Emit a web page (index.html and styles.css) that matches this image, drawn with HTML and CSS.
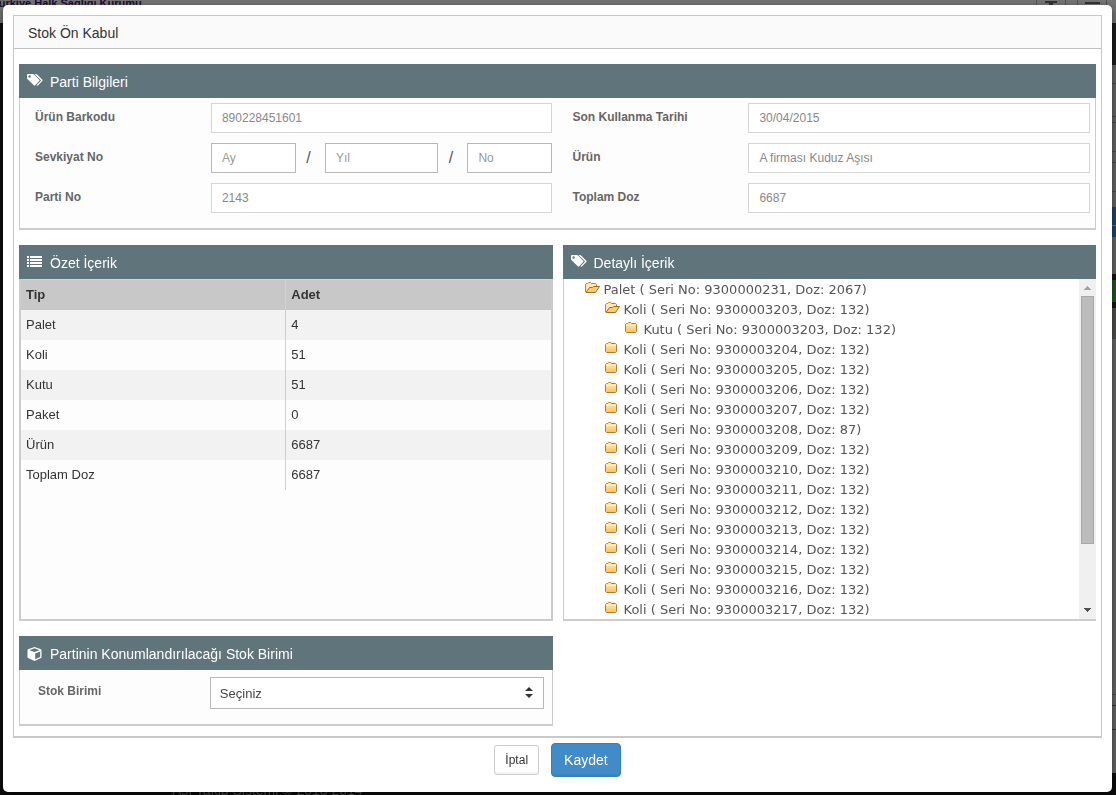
FILE: index.html
```html
<!DOCTYPE html>
<html lang="tr">
<head>
<meta charset="utf-8">
<meta name="viewport" content="width=device-width, initial-scale=1">
<title>Stok Ön Kabul</title>
<link rel="stylesheet" href="styles.css">
</head>
<body>
<svg class="defs" aria-hidden="true">
  <symbol id="i-tags" viewBox="0 0 16 12">
    <path fill="#fff" fill-rule="evenodd" d="M0 1.2C0 .5.5 0 1.200 0H5.500C6.200 0 6.800.3 7.300.8L12.200 5.700Q12.900 6.400 12.200 7.100L8.200 11.300Q7.500 12 6.800 11.300L.9 5.600Q0 4.800 0 4ZM2.600 1.300A1.200 1.200 0 1 0 2.600 3.700A1.200 1.200 0 1 0 2.600 1.300Z"/>
    <path fill="#fff" d="M7.500 0H8.600C9.300 0 9.900.3 10.400.8L15.300 5.700Q16 6.400 15.300 7.100L11.200 11.300Q10.300 12.200 9.500 11.300L13.400 7.200Q14.100 6.400 13.400 5.700Z"/>
  </symbol>
  <symbol id="i-list" viewBox="0 0 16 12">
    <path fill="#fff" d="M0 0h2v2H0zM3 0h12v2H3zM0 3h2v2H0zM3 3h12v2H3zM0 6h2v2H0zM3 6h12v2H3zM0 9h2v2H0zM3 9h12v2H3z"/>
  </symbol>
  <symbol id="i-cube" viewBox="0 0 16 14">
    <path fill="#fff" fill-rule="evenodd" d="M7.500 0L14 2.300Q14.500 2.600 14.500 3.200V10Q14.500 10.700 14 11L7.500 14L1 11Q.5 10.700.5 10V3.200Q.5 2.600 1 2.300ZM7.500 1.300L2.500 3.200L7.500 5.100L12.500 3.200ZM8.200 6.400V12.200L13.200 9.900V4.500Z"/>
  </symbol>
  <linearGradient id="g-folder" x1="0" y1="0" x2="0" y2="1">
    <stop offset="0" stop-color="#fff0b8"/><stop offset="1" stop-color="#f9bf62"/>
  </linearGradient>
  <symbol id="i-closed" viewBox="0 0 16 12">
    <path fill="url(#g-folder)" stroke="#b87a2c" d="M.5 2.500L1.500 1.500H2.500L3.500.5H5.500L6.500 1.500H10.500L11.500 2.500V9.500L10.500 10.500H1.500L.5 9.500Z"/>
    <path fill="none" stroke="#fff3c4" d="M1 3.500H11"/>
  </symbol>
  <symbol id="i-open" viewBox="0 0 16 12">
    <path fill="#fde9b4" stroke="#c0812f" d="M.5 10V2.500L1.500 1.500H2.500L3.500.5H5.500L6.500 1.500H10.500L11.500 2.500V5.500"/>
    <path fill="#fbcb72" stroke="#a96a1c" d="M1 10.500L4.500 5.500H7.500L8.500 4.500H14.500L10.500 10.500Z"/>
  </symbol>
  <symbol id="i-up" viewBox="0 0 7 4"><path fill="#a3a3a3" d="M3 0h1v1h1v1h1v1h1v1H0V3h1V2h1V1h1z"/></symbol>
  <symbol id="i-down" viewBox="0 0 7 4"><path fill="#505050" d="M0 0h7v1H6v1H5v1H4v1H3V3H2V2H1V1H0z"/></symbol>
</svg>

<div class="backdrop">
  <div class="backdrop-top">Türkiye Halk Sağlığı Kurumu
    <svg class="backdrop-tools" viewBox="0 0 80 14" aria-hidden="true">
      <path fill="none" stroke="#555" d="M.5 0V13.500H29.500V0M41.500 0V13.500H70.500V0"/>
      <path fill="#333" d="M9 1H21V3H17V6H13V3H9ZM49 2H64V4H49Z"/>
    </svg>
  </div>
  <div class="backdrop-edge"></div>
  <div class="backdrop-foot">Aşı Takip Sistemi © 2013 2014</div>
</div>

<main class="modal" role="dialog" aria-labelledby="title">
  <section class="panel">
    <h1 class="panel-title" id="title">Stok Ön Kabul</h1>
    <div class="panel-body">

      <section class="box">
        <h2 class="box-title"><svg class="icon tags"><use href="#i-tags"/></svg>Parti Bilgileri</h2>
        <div class="box-body batch">
          <div class="fields">
            <label for="barkod">Ürün Barkodu</label>
            <input class="control readonly" id="barkod" value="890228451601" readonly>
            <label for="ay">Sevkiyat No</label>
            <div class="shipment">
              <input class="control" id="ay" placeholder="Ay">
              <span>/</span>
              <input class="control" placeholder="Yıl" aria-label="Yıl">
              <span>/</span>
              <input class="control" placeholder="No" aria-label="No">
            </div>
            <label for="parti">Parti No</label>
            <input class="control readonly" id="parti" value="2143" readonly>
          </div>
          <div class="fields">
            <label for="skt">Son Kullanma Tarihi</label>
            <input class="control readonly" id="skt" value="30/04/2015" readonly>
            <label for="urun">Ürün</label>
            <input class="control readonly" id="urun" value="A firması Kuduz Aşısı" readonly>
            <label for="doz">Toplam Doz</label>
            <input class="control readonly" id="doz" value="6687" readonly>
          </div>
        </div>
      </section>

      <div class="columns">
        <section class="box">
          <h2 class="box-title"><svg class="icon list"><use href="#i-list"/></svg>Özet İçerik</h2>
          <div class="box-body summary">
            <table>
              <thead><tr><th scope="col">Tip</th><th scope="col">Adet</th></tr></thead>
              <tbody>
                <tr><td>Palet</td><td>4</td></tr>
                <tr><td>Koli</td><td>51</td></tr>
                <tr><td>Kutu</td><td>51</td></tr>
                <tr><td>Paket</td><td>0</td></tr>
                <tr><td>Ürün</td><td>6687</td></tr>
                <tr><td>Toplam Doz</td><td>6687</td></tr>
              </tbody>
            </table>
          </div>
        </section>

        <section class="box">
          <h2 class="box-title"><svg class="icon tags"><use href="#i-tags"/></svg>Detaylı İçerik</h2>
          <div class="box-body detail">
            <ul class="tree">
              <li><div class="node"><svg><use href="#i-open"/></svg>Palet ( Seri No: 9300000231, Doz: 2067)</div>
                <ul>
                  <li><div class="node"><svg><use href="#i-open"/></svg>Koli ( Seri No: 9300003203, Doz: 132)</div>
                    <ul>
                      <li class="node"><svg><use href="#i-closed"/></svg>Kutu ( Seri No: 9300003203, Doz: 132)</li>
                    </ul>
                  </li>
                  <li class="node"><svg><use href="#i-closed"/></svg>Koli ( Seri No: 9300003204, Doz: 132)</li>
                  <li class="node"><svg><use href="#i-closed"/></svg>Koli ( Seri No: 9300003205, Doz: 132)</li>
                  <li class="node"><svg><use href="#i-closed"/></svg>Koli ( Seri No: 9300003206, Doz: 132)</li>
                  <li class="node"><svg><use href="#i-closed"/></svg>Koli ( Seri No: 9300003207, Doz: 132)</li>
                  <li class="node"><svg><use href="#i-closed"/></svg>Koli ( Seri No: 9300003208, Doz: 87)</li>
                  <li class="node"><svg><use href="#i-closed"/></svg>Koli ( Seri No: 9300003209, Doz: 132)</li>
                  <li class="node"><svg><use href="#i-closed"/></svg>Koli ( Seri No: 9300003210, Doz: 132)</li>
                  <li class="node"><svg><use href="#i-closed"/></svg>Koli ( Seri No: 9300003211, Doz: 132)</li>
                  <li class="node"><svg><use href="#i-closed"/></svg>Koli ( Seri No: 9300003212, Doz: 132)</li>
                  <li class="node"><svg><use href="#i-closed"/></svg>Koli ( Seri No: 9300003213, Doz: 132)</li>
                  <li class="node"><svg><use href="#i-closed"/></svg>Koli ( Seri No: 9300003214, Doz: 132)</li>
                  <li class="node"><svg><use href="#i-closed"/></svg>Koli ( Seri No: 9300003215, Doz: 132)</li>
                  <li class="node"><svg><use href="#i-closed"/></svg>Koli ( Seri No: 9300003216, Doz: 132)</li>
                  <li class="node"><svg><use href="#i-closed"/></svg>Koli ( Seri No: 9300003217, Doz: 132)</li>
                </ul>
              </li>
            </ul>
            <div class="scrollbar" aria-hidden="true">
              <svg><use href="#i-up"/></svg>
              <div class="track"><div class="thumb"></div></div>
              <svg><use href="#i-down"/></svg>
            </div>
          </div>
        </section>

        <section class="box">
          <h2 class="box-title"><svg class="icon"><use href="#i-cube"/></svg>Partinin Konumlandırılacağı Stok Birimi</h2>
          <div class="box-body unit">
            <label for="birim">Stok Birimi</label>
            <div class="select">
              <select id="birim"><option>Seçiniz</option></select>
              <svg viewBox="0 0 8 11" aria-hidden="true"><path fill="#333" d="M4 0L8 4H0ZM4 11L0 7H8Z"/></svg>
            </div>
          </div>
        </section>
      </div>
    </div>
  </section>

  <div class="actions">
    <button class="btn" type="button">İptal</button>
    <button class="btn primary" type="button">Kaydet</button>
  </div>
</main>
</body>
</html>
```

FILE: styles.css
```css
* { box-sizing: border-box; }

body {
  margin: 0;
  padding: 5px 4px 3px 3px;
  background: #0c0c0c;
  color: #333;
  font: 13px/20px "Liberation Sans", Arial, sans-serif;
}

.defs { position: absolute; width: 0; height: 0; }
h1, h2, ul { margin: 0; padding: 0; font-weight: normal; list-style: none; }
svg { flex: none; }
input, select, button { font-family: inherit; margin: 0; }

/* Dimmed page behind the dialog */
.backdrop {
  position: fixed;
  inset: 0;
  overflow: hidden;
}
.backdrop-top {
  height: 23px;
  background: #757575;
  color: #1f0c33;
  font-size: 11px;
  font-weight: bold;
  line-height: 6px;
  text-indent: -8px;
}
.backdrop-tools {
  position: absolute;
  top: 0;
  right: 0;
  width: 80px;
  height: 14px;
}
.backdrop-edge {
  position: absolute;
  top: 23px;
  right: 0;
  bottom: 0;
  width: 12px;
  background: linear-gradient(
    #1c1c1c 42px, #666 42px 60px, #4c4c4c 60px 61px,
    #666 61px 93px, #4c4c4c 93px 94px, #666 94px 99px, #4c4c4c 99px 100px,
    #666 100px 128px, #4c4c4c 128px 129px, #666 129px 139px, #4c4c4c 139px 140px,
    #666 140px 168px, #4c4c4c 168px 169px, #666 169px 184px,
    #1a456b 184px 202px, #5b7890 202px 203px, #1a456b 203px 214px,
    #666 214px 251px, #161616 251px 257px, #225522 257px 279px, #161616 279px 285px,
    #504e4d 285px 316px, #666 316px 671px, #4c4c4c 671px 672px,
    #666 672px 682px, #333 682px 683px, #666 683px 706px, #333 706px 707px,
    #666 707px 750px, #0c0c0c 750px);
}
.backdrop-foot {
  position: absolute;
  left: 172px;
  bottom: -3px;
  color: #555;
  font-size: 14px;
  line-height: 15px;
}

.modal {
  position: relative;
  padding: 10px 10px 15px;
  background: #fff;
  border-radius: 5px;
  box-shadow: 0 3px 9px rgba(0, 0, 0, .5);
}

.panel {
  border: 1px solid #c8c8c8;
  border-bottom-width: 2px;
}
.panel-title {
  padding: 7px 14px 5px;
  border-bottom: 1px solid #c0c0c0;
  background: #fafafa;
  font-size: 14px;
  line-height: 20px;
}
.panel-body {
  display: flex;
  flex-direction: column;
  gap: 15px;
  padding: 15px 5px 10px;
}

.columns {
  display: grid;
  grid-template-columns: repeat(2, minmax(0, 1fr));
  gap: 15px 10px;
}

.box { display: flex; flex-direction: column; }
.box-title {
  display: flex;
  align-items: center;
  gap: 7px;
  padding: 2px 8px 0;
  background: #60747b;
  color: #fff;
  font-size: 14px;
  line-height: 32px;
}
.icon { width: 16px; height: 14px; }
.tags { height: 12px; margin-bottom: 4px; }
.list { height: 12px; margin-bottom: 2px; }
.box-body {
  flex: 1;
  border: 1px solid #ccc;
  border-top: 0;
  border-bottom-width: 2px;
  background: #fdfdfd;
}

.batch {
  display: grid;
  grid-template-columns: 1fr 1fr;
  padding: 5px 0 15px;
}
.fields {
  display: grid;
  grid-template-columns: 34% 66%;
  row-gap: 10px;
  padding: 0 5px 0 15px;
}
label {
  color: #666;
  font-size: 12px;
  font-weight: bold;
  line-height: 28px;
}
.control {
  width: 100%;
  min-width: 0;
  height: 30px;
  padding: 0 10px;
  border: 1px solid #b8b8b8;
  background: #fff;
  color: #888;
  font-size: 12px;
}
.control::placeholder { color: #999; opacity: 1; }
.readonly { border-color: #d5d5d5; }
.shipment {
  display: grid;
  grid-template-columns: 3fr 29px 4fr 29px 3fr;
  align-items: center;
  text-align: center;
  color: #555;
  font-size: 16px;
}
.shipment span { padding-right: 4px; }

.summary {
  min-height: 342px;
  border-width: 0 2px 2px;
}
table {
  width: 100%;
  border-collapse: collapse;
  table-layout: fixed;
}
th, td {
  height: 30px;
  padding: 0 5px;
  text-align: left;
}
th + th, td + td { border-left: 1px solid #d0d0d0; }
th { background: #c8c8c8; border-top: 1px solid #d5d5d5; }
tbody tr:nth-child(odd) { background: #f2f2f2; }

.detail {
  display: flex;
  max-height: 342px;
  border-right: 0;
  background: #fff;
}
.tree {
  flex: 1;
  overflow: hidden;
  padding: 1px 0 0 21px;
  color: #555;
  font-family: Verdana, "DejaVu Sans", sans-serif;
}
.tree ul { padding-left: 20px; }
.node {
  display: flex;
  gap: 3px;
  height: 20px;
  white-space: nowrap;
}
.node svg { width: 16px; height: 12px; margin-top: 2px; }

.scrollbar {
  display: flex;
  flex-direction: column;
  align-items: center;
  width: 17px;
  padding: 7px 2px;
  gap: 6px;
  background: #f0f0f0;
}
.scrollbar svg { width: 7px; height: 4px; }
.track { flex: 1; width: 100%; }
.thumb {
  height: 81%;
  border: 1px solid #a8a8a8;
  background: #bcbcbc;
}

.unit {
  display: grid;
  grid-template-columns: 34% 1fr;
  padding: 7px 8px 15px 18px;
}
.select { position: relative; }
.select select {
  width: 100%;
  height: 32px;
  padding: 0 9px;
  border: 1px solid #b8b8b8;
  border-radius: 0;
  background: #fff;
  color: #444;
  font-size: 13px;
  appearance: none;
}
.select svg {
  position: absolute;
  top: 10px;
  right: 11px;
  width: 8px;
  height: 11px;
  pointer-events: none;
}

.actions {
  display: flex;
  justify-content: center;
  align-items: center;
  gap: 12px;
  padding-top: 5px;
}
.btn {
  height: 30px;
  padding: 0 10px;
  border: 1px solid #ccc;
  border-radius: 3px;
  background: #fff;
  box-shadow: inset 0 -2px 0 rgba(0, 0, 0, .05);
  color: #333;
  font-size: 12px;
}
.primary {
  height: 34px;
  padding: 0 12px;
  border-color: #357ebd;
  border-radius: 4px;
  background: #428bca;
  color: #fff;
  font-size: 14px;
}
```
